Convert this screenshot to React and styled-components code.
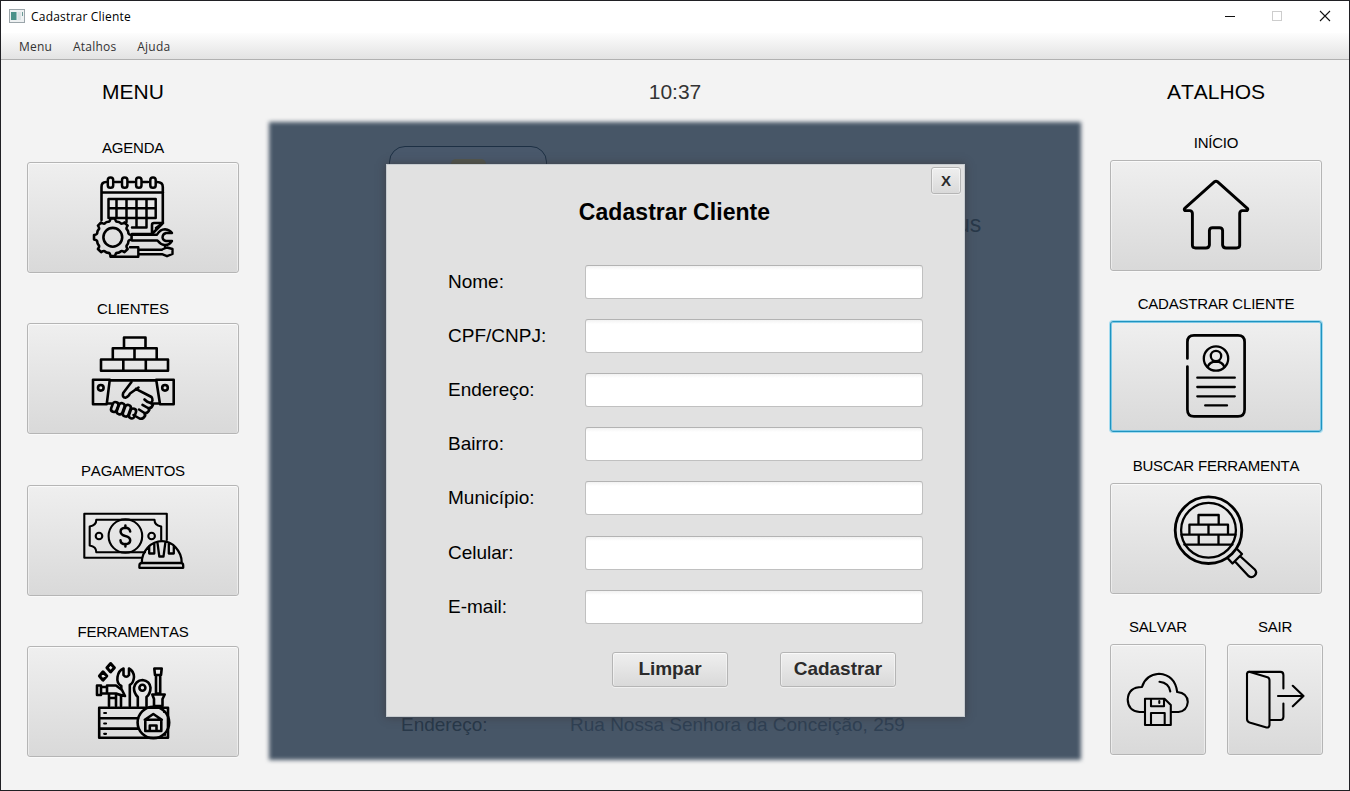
import React from "react";
import styled, { createGlobalStyle } from "styled-components";

const GlobalStyle = createGlobalStyle`
  * { box-sizing: border-box; }
  body { margin: 0; background: #f3f3f3; font-family: "Liberation Sans", Arial, sans-serif; color: #000; font-kerning: none; }
  button { font-family: inherit; padding: 0; }
`;

const Window = styled.div`
  width: 1350px;
  height: 791px;
  border: 1px solid #202024;
  background: #f3f3f3;
  display: flex;
  flex-direction: column;
  overflow: hidden;
`;

const TitleBar = styled.header`
  height: 32px;
  flex: none;
  background: #fff;
  display: flex;
  align-items: center;
  padding: 0 0 2px 8px;
  font: 12px/16px "Open Sans", "Noto Sans", sans-serif;
`;

const WindowTitle = styled.span`
  margin-left: 6px;
  padding-top: 2px;
  flex: 1;
  letter-spacing: 0.2px;
`;

const WindowControls = styled.svg`
  width: 124px;
  height: 30px;
  flex: none;
`;

const MenuBar = styled.nav`
  height: 27px;
  flex: none;
  display: flex;
  align-items: center;
  gap: 21px;
  padding: 2px 0 0 18px;
  background: linear-gradient(#fdfdfd, #e3e3e3);
  border-bottom: 1px solid #b1b1b1;
  color: #333;
  font: 12px/16px "Open Sans", "Noto Sans", sans-serif;
`;

const MenuItem = styled.span`
  letter-spacing: 0.2px;
`;

const Main = styled.main`
  flex: 1;
  display: grid;
  grid-template-columns: 213px 812px 213px;
  column-gap: 29px;
  padding: 20px 0 0 26px;
`;

const Side = styled.aside`
  width: 212px;
  display: flex;
  flex-direction: column;
`;

const Heading = styled.h2`
  margin: 0;
  height: 24px;
  font-size: 21px;
  line-height: 24px;
  font-weight: 400;
  text-align: center;
  color: ${(p) => p.$color || "#000"};
`;

const Stack = styled.div`
  display: flex;
  flex-direction: column;
  gap: ${(p) => p.$gap}px;
  margin-top: ${(p) => p.$top}px;
`;

const Pair = styled.div`
  display: flex;
  gap: 21px;
  width: 213px;
`;

const Entry = styled.div`
  width: ${(p) => p.$w || 212}px;
  display: flex;
  flex-direction: column;
`;

const EntryLabel = styled.div`
  height: 18px;
  font-size: 15px;
  line-height: 18px;
  letter-spacing: -0.2px;
  text-align: center;
  white-space: nowrap;
`;

const Button = styled.button`
  border: 1px solid #b5b5b5;
  border-radius: 3px;
  background: linear-gradient(#efefef, #d9d9d9);
  box-shadow: inset 0 1px 0 #fafafa, inset 1px 0 0 rgba(255, 255, 255, 0.45),
    inset -1px 0 0 rgba(255, 255, 255, 0.45), 0 1px 0 rgba(255, 255, 255, 0.5);
  color: #2b2b2b;
  font-weight: 700;
`;

const IconButton = styled(Button)`
  height: 111px;
  margin-top: ${(p) => p.$gap || 0}px;
  ${(p) =>
    p.$focused &&
    `border-color: #1f93bf;
     box-shadow: inset 0 0 0 1px #7cc8e6, 0 0 0 1px #a5dcf0;`}
`;

const Icon = styled.svg`
  display: block;
  margin: -1px;
  overflow: visible;
  fill: none;
  stroke: #000;
  stroke-width: ${(p) => p.$stroke || 2.6};
  stroke-linejoin: round;
  stroke-linecap: round;
`;

const Center = styled.section`
  display: flex;
  flex-direction: column;
  position: relative;
`;

const Stage = styled.div`
  position: relative;
  height: 638px;
  margin-top: 18px;
  padding: 42px 0 0 117px;
`;

const Shade = styled.div`
  position: absolute;
  inset: 0;
  background: #475667;
  filter: blur(2px);
`;

const LogoFrame = styled.div`
  position: absolute;
  left: 120px;
  top: 24px;
  width: 158px;
  height: 60px;
  border: 1px solid #1d3044;
  border-radius: 16px;
  background: #49586b;
`;

const LogoHint = styled.div`
  position: absolute;
  left: 61px;
  top: 12px;
  width: 35px;
  height: 14px;
  border-radius: 5px;
  background: #53574f;
`;

const Behind = styled.div`
  position: absolute;
  left: ${(p) => p.$x}px;
  top: ${(p) => p.$y}px;
  font-size: ${(p) => p.$size || 19}px;
  line-height: 24px;
  color: ${(p) => p.$color || "#283849"};
  white-space: nowrap;
`;

const Dialog = styled.div`
  position: relative;
  width: 579px;
  height: 553px;
  background: #e1e1e1;
  border: 1px solid #c6cbcf;
  box-shadow: 0 0 8px rgba(60, 50, 50, 0.65);
  display: flex;
  flex-direction: column;
`;

const CloseButton = styled(Button)`
  align-self: flex-end;
  flex: none;
  width: 30px;
  height: 27px;
  margin: 2px 3px 0 0;
  font-size: 15px;
  line-height: 20px;
`;

const DialogTitle = styled.h1`
  margin: 4px 2px 0 0;
  font-size: 23px;
  line-height: 28px;
  letter-spacing: 0.05px;
  text-align: center;
`;

const Form = styled.form`
  display: flex;
  flex-direction: column;
  gap: 20.12px;
  padding: 39px 41px 0 61px;
`;

const Field = styled.label`
  display: grid;
  grid-template-columns: 137px 338px;
  align-items: center;
  height: 34px;
  font-size: 19px;
`;

const Input = styled.input`
  height: 34px;
  width: 338px;
  border: 1px solid #c0c0c0;
  border-top-color: #b3b3b3;
  border-radius: 3px;
  background: linear-gradient(#f2f2f2, #fff 4px);
  outline: none;
`;

const Actions = styled.div`
  display: flex;
  gap: 52px;
  padding: 28.3px 0 0 225px;
`;

const ActionButton = styled(Button)`
  width: 116px;
  height: 35px;
  font-size: 19px;
  line-height: 30px;
  letter-spacing: -0.05px;
`;

const gearPath = (cx, cy, outer, inner, teeth) => {
  const step = (Math.PI * 2) / teeth;
  const at = (r, a) =>
    `${(cx + r * Math.cos(a)).toFixed(2)} ${(cy + r * Math.sin(a)).toFixed(2)}`;
  let d = "";
  for (let i = 0; i < teeth; i++) {
    const a = i * step;
    d += `${i ? "L" : "M"}${at(outer, a - step * 0.15)}L${at(outer, a + step * 0.15)}`;
    d += `Q${at(inner, a + step * 0.24)} ${at(inner + 0.6, a + step * 0.36)}`;
    d += `Q${at(inner + 1.2, a + step * 0.5)} ${at(inner + 0.6, a + step * 0.64)}`;
    d += `Q${at(inner, a + step * 0.76)} ${at(outer, a + step * 0.85)}`;
  }
  return d + "Z";
};

const AgendaIcon = () => (
  <Icon width="212" height="111" viewBox="27 162 212 111">
    <path d="M101.5 220V187Q101.5 182 106 182M115 182H120M129 182H134M143 182H148M157 182Q162.8 182 162.8 187V223M101.5 192.5H163M163 223L152 234H132M152 234V225Q152 223 154 223H163M163 223L156 228" />
    <g strokeWidth="2.5">
      {[110.5, 124.7, 138.8, 153].map((x) => (
        <rect key={x} x={x - 2.7} y="177.5" width="5.4" height="10.3" rx="2.6" />
      ))}
      <path d="M108.5 218V199H155.7V218H108.5M108.5 208.3H155.7M116.5 199V218M126.5 199V222M136.5 199V227.5M146.5 199V227.5H132" />
    </g>
    <path d={gearPath(112.8, 237.3, 18.9, 15.6, 8)} />
    <circle cx="112.8" cy="237.3" r="9.4" />
    <path strokeWidth="2.4" d="M132 234.7H157Q160 229.5 165 229.3Q170 230 172 233H166Q162.5 234 162.5 237.5Q163 240.5 166 241H172Q169 245.5 164.5 245Q160.5 244.5 157.5 240.5H132" />
    <path strokeWidth="2.4" d="M130 247.3H138.3V256.7H110.5M138.3 249.7H162M138.3 254.2H162M162 249.5L167 247.5L172.5 249V254L167 256.2L162 254.2M165 246.5V248" />
  </Icon>
);

const ClientesIcon = () => (
  <Icon width="212" height="111" viewBox="27 323 212 111">
    <path d="M124 348V337.5H145.5V348M112.8 359.3V348.3H156.7V359.3M134.5 348.3V359.3M101 359.5H168V370.8H101ZM123.3 359.5V370.8M145.8 359.5V370.8" />
    <path d="M93 379.7H109.8L106.7 404.3H93ZM173.7 379.7H156.2L160 404.3H173.7ZM109.8 380.4H156.2M107.3 403.5H111.5M153 403.5H159" />
    <circle cx="100.8" cy="387.8" r="2.8" />
    <circle cx="165" cy="387.8" r="2.8" />
    <path d="M131.5 382L123.2 393Q121.8 397.5 125.5 397.7Q128.2 397.2 130 393.5L138.5 387.5M135.8 388.8L151.5 397Q154 400.8 150.5 403Q147 402.2 144.5 399.5" />
    <path d="M150.5 403L153 404.5Q151.5 409 148 408L142.5 404.8M148 408.3L149.5 409.5Q147.5 414 144.5 413L139 409.5M144.3 413L145.2 415.5Q143 419.5 139.5 418.5L133.5 415" />
    <rect x="111.8" y="402" width="5.8" height="10" rx="2.8" transform="rotate(20 114.7 407)" />
    <rect x="117.7" y="403" width="5.8" height="11.5" rx="2.8" transform="rotate(20 120.6 409)" />
    <rect x="123.8" y="404.7" width="5.8" height="12" rx="2.8" transform="rotate(20 126.7 411)" />
    <rect x="129.7" y="408.5" width="5.6" height="10" rx="2.7" transform="rotate(20 132.5 413.5)" />
  </Icon>
);

const PagamentosIcon = () => (
  <Icon width="212" height="111" viewBox="27 485 212 111" $stroke={2.1}>
    <path d="M142 557.8H84.3V513.8H166.8V540" />
    <path d="M145 552.3H96.3Q96.3 546.5 89.7 545.5V526.5Q96.3 525.5 96.3 519.8H154.5Q154.5 525.5 161.2 526.5V540" />
    <circle cx="125.4" cy="536" r="16.8" />
    <circle cx="99" cy="536" r="3.3" />
    <circle cx="151.6" cy="536" r="3.3" />
    <path strokeWidth="2.5" d="M130.2 531.5Q129.5 527.8 125.4 527.8Q120.5 528 120.6 531.8Q121 534.8 125.4 536Q130.4 537.2 130.2 540.7Q129.8 544.2 125.4 544.2Q120.8 544.2 120.5 540.3M125.4 525.5V528M125.4 544V546.5" />
    <path strokeWidth="2.3" d="M141.8 562.5Q141.8 554 147.8 547.5Q154 541.2 162 541.2Q170 541.2 175.7 547.5Q181.7 554 181.7 562.5M139.4 565.5Q139.4 563 142 563H181Q183.2 563 183.2 565.5V567.8H139.4ZM157.5 542.8L159.3 556.5H163.5L165.3 542.8M149.2 546V553.5H154.3V543.5M173.8 546V553.5H168.8V543.5" />
  </Icon>
);

const FerramentasIcon = () => (
  <Icon width="212" height="111" viewBox="27 646 212 111" $stroke={2.6}>
    <path d="M168 737.8H99.2V707.7H168V737.8M99.2 718.2H138M99.2 728.6H138" />
    <path strokeWidth="2.2" d="M104.2 713H106M104.2 723.5H106M104.2 733.8H106M164 712H165M165 734V735" />
    <circle cx="153.4" cy="722.5" r="15.8" />
    <path d="M145.3 721.5V731H161.3V721.5M144.8 719.8L153.3 714L161.8 719.8ZM149.8 731V725.5H156.5V731" />
    <path d="M97 685.5H101V695H97ZM101 687H107V693.5H101M107 685.5H116L122 690L125 696Q121 695.5 116 693.5H107ZM109 693.5V706M116 693.5V706M121 696V706M109 698H116" />
    <path d="M121.3 686Q116.5 683.5 117.5 677Q118.5 670.5 123.5 668.5V675Q126.2 678.5 129 675V668.5Q133.8 671 134 677Q133.5 683 129.8 685V706M121.3 686V689" />
    <path d="M137.8 706V697Q133.8 693 134 687.7Q135.5 680.5 142.5 680Q149.8 681 150.5 687.7Q150.5 693.5 146.5 697V706" />
    <circle cx="142.4" cy="687.7" r="3" />
    <path d="M154.3 668.5H161.7L161 675H155ZM156 675V693.5H160.2V675M152.3 694.5H164.7L162.5 699V706H154V699Z" />
    <path strokeWidth="3" d="M110.6 663.5L114.4 667.7L110.6 671.9L106.9 667.7ZM103 671.8L106.8 676L103 680.2L99.4 676Z" />
  </Icon>
);

const InicioIcon = () => (
  <Icon width="212" height="111" viewBox="1110 160 212 111">
    <path
      strokeWidth="2.9"
      d="M1214.6 181.7Q1216 180.7 1217.4 181.7L1247.3 208.3Q1248.3 209.4 1247 210.6H1242Q1239.7 211 1239.7 213.5V245.5Q1239.5 248 1236.5 248H1226Q1223 248 1222.6 245V230.5Q1222.3 227.8 1219.5 227.8H1212.5Q1209.7 227.8 1209.4 230.5V245Q1209 248 1206 248H1195.5Q1192.6 248 1192.4 245.5V213.5Q1192.4 211 1190 210.6H1185Q1183.8 209.4 1184.7 208.3Z"
    />
  </Icon>
);

const CadastrarIcon = () => (
  <Icon width="212" height="111" viewBox="1110 321 212 111" $stroke={2.7}>
    <path d="M1187.4 358.5V342Q1187.4 335.3 1194 335.3H1238Q1244.6 335.3 1244.6 342V409.5Q1244.6 416.4 1238 416.4H1194Q1187.4 416.4 1187.4 409.5V366.5" />
    <circle cx="1216" cy="358.5" r="12.2" strokeWidth="2.3" />
    <circle cx="1216" cy="356" r="5.2" strokeWidth="2.3" />
    <path strokeWidth="2.3" d="M1207.7 367Q1209.5 361.7 1216 361.5Q1222.5 361.7 1224.3 367M1197.3 377.7H1234.8M1197.3 387H1234.8M1197.3 396.3H1234.8M1205.2 405.4H1227" />
  </Icon>
);

const BuscarIcon = () => (
  <Icon width="212" height="111" viewBox="1110 483 212 111" $stroke={2.3}>
    <circle cx="1208.5" cy="530.2" r="33.3" strokeWidth="2.8" />
    <circle cx="1208.5" cy="530.2" r="27.4" />
    <path d="M1198.5 524.5V515H1218.7V524.5M1189.4 534.5V524.7H1228V534.5M1208.5 524.7V534.5M1181.5 534.6H1235.5M1184.3 544.6H1232.5M1198.7 534.6V544.6M1218.5 534.6V544.6" />
    <path d="M1227.5 558L1232.5 563.5L1242 554L1236.5 548.5M1235 561.5L1248.5 576Q1251.8 578.5 1254.8 575.5Q1257.5 572.5 1254.8 569.5L1240.5 556.5" />
  </Icon>
);

const SalvarIcon = () => (
  <Icon width="96" height="111" viewBox="1110 644 96 111" $stroke={2.1}>
    <path d="M1144 712H1139.5Q1128 711 1127.7 699.5Q1128.5 687 1142 687Q1145.5 675 1159 673.8Q1175 675 1177.2 692Q1187.5 693 1187.8 702Q1187 711 1178.5 712H1171M1159.5 681.8Q1169 682.8 1170.3 691.5" />
    <path d="M1145 698.7H1164.5L1170.8 705V725H1145ZM1151 698.7V706.3H1164V698.7M1151 725V713H1164.7V725M1159.3 701V703" />
  </Icon>
);

const SairIcon = () => (
  <Icon width="96" height="111" viewBox="1227 644 96 111" $stroke={2.1}>
    <path d="M1247 673.5Q1247.5 671.5 1250 672L1267.5 677.3Q1269.5 678 1269.5 680.5V725Q1269 728 1266.5 727.4L1249.5 722.5Q1247 721.7 1247 719ZM1249 671.9H1280.5Q1283.3 672 1283.4 675V688.5M1283.4 703.5V717Q1283.2 720 1280.5 720H1269.5M1278 696H1303.5M1292.8 685.8L1303.5 696L1292.8 706.3" />
  </Icon>
);

const MENU = [
  ["AGENDA", AgendaIcon],
  ["CLIENTES", ClientesIcon],
  ["PAGAMENTOS", PagamentosIcon],
  ["FERRAMENTAS", FerramentasIcon],
];

const SHORTCUTS = [
  ["INÍCIO", InicioIcon],
  ["CADASTRAR CLIENTE", CadastrarIcon, true],
  ["BUSCAR FERRAMENTA", BuscarIcon],
];

const FIELDS = ["Nome:", "CPF/CNPJ:", "Endereço:", "Bairro:", "Município:", "Celular:", "E-mail:"];

const Shortcut = ({ label, icon: Glyph, focused, width, gap }) => (
  <Entry $w={width}>
    <EntryLabel>{label}</EntryLabel>
    <IconButton $focused={focused} $gap={gap} aria-label={label}>
      <Glyph />
    </IconButton>
  </Entry>
);

export default function App() {
  return (
    <>
      <GlobalStyle />
      <Window>
        <TitleBar>
          <svg width="16" height="14" viewBox="0 0 16 14">
            <rect x="0.5" y="0.5" width="15" height="13" fill="#eef1f2" stroke="#9ba5aa" />
            <rect x="2" y="3" width="5.5" height="8" fill="#4b9189" />
            <rect x="8.5" y="3" width="3.5" height="8" fill="#dce3e5" />
            <rect x="13" y="3" width="1" height="4" fill="#6c9b96" />
          </svg>
          <WindowTitle>Cadastrar Cliente</WindowTitle>
          <WindowControls viewBox="0 0 124 30" fill="none">
            <path d="M0 15.5H10" stroke="#111" />
            <rect x="47.5" y="10.5" width="9" height="9" stroke="#cdcdcd" />
            <path d="M95 10L105 20M105 10L95 20" stroke="#111" strokeWidth="1.1" />
          </WindowControls>
        </TitleBar>
        <MenuBar>
          <MenuItem>Menu</MenuItem>
          <MenuItem>Atalhos</MenuItem>
          <MenuItem>Ajuda</MenuItem>
        </MenuBar>
        <Main>
          <Side>
            <Heading>MENU</Heading>
            <Stack $top={35} $gap={27.33}>
              {MENU.map(([label, icon]) => (
                <Shortcut key={label} label={label} icon={icon} gap={5} />
              ))}
            </Stack>
          </Side>
          <Center>
            <Heading $color="#333">10:37</Heading>
            <Stage>
              <Shade />
              <LogoFrame>
                <LogoHint />
              </LogoFrame>
              <Behind $x={688} $y={90} $size={23}>us</Behind>
              <Behind $x={132} $y={591}>Endereço:</Behind>
              <Behind $x={301} $y={591} $color="#2f4053">Rua Nossa Senhora da Conceição, 259</Behind>
              <Dialog>
                <CloseButton>X</CloseButton>
                <DialogTitle>Cadastrar Cliente</DialogTitle>
                <Form>
                  {FIELDS.map((name) => (
                    <Field key={name}>
                      {name}
                      <Input />
                    </Field>
                  ))}
                </Form>
                <Actions>
                  <ActionButton>Limpar</ActionButton>
                  <ActionButton>Cadastrar</ActionButton>
                </Actions>
              </Dialog>
            </Stage>
          </Center>
          <Side>
            <Heading>ATALHOS</Heading>
            <Stack $top={30} $gap={24.33}>
              {SHORTCUTS.map(([label, icon, focused]) => (
                <Shortcut key={label} label={label} icon={icon} focused={focused} gap={8} />
              ))}
              <Pair>
                <Shortcut label="SALVAR" icon={SalvarIcon} width={96} gap={8} />
                <Shortcut label="SAIR" icon={SairIcon} width={96} gap={8} />
              </Pair>
            </Stack>
          </Side>
        </Main>
      </Window>
    </>
  );
}
